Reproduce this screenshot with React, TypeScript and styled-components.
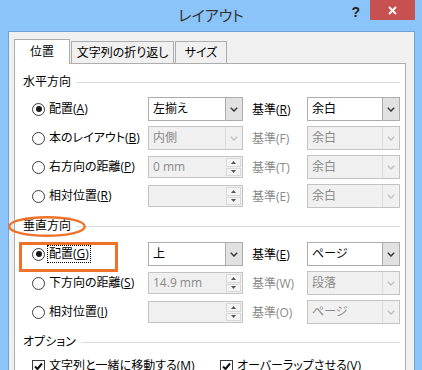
import React from "react";
import styled, { createGlobalStyle } from "styled-components";

const ORANGE = "#ee7229";

const GlobalStyle = createGlobalStyle`
  html, body {
    margin: 0;
    padding: 0;
  }
  body {
    width: 422px;
    height: 370px;
    overflow: hidden;
    font-family: "Open Sans", "Noto Sans CJK JP", sans-serif;
    font-size: 12px;
    color: #000;
    font-feature-settings: "palt" 1;
  }
  * {
    box-sizing: border-box;
  }
`;

const Frame = styled.div`
  width: 422px;
  height: 370px;
  background: #8bc4f8;
  display: flex;
  flex-direction: column;
  overflow: hidden;
`;

const TitleBar = styled.div`
  height: 31px;
  flex: none;
  display: grid;
  grid-template-columns: 1fr auto 1fr;
  align-items: start;
`;

const Title = styled.div`
  grid-column: 2;
  font-size: 15px;
  line-height: 30px;
  color: #333;
`;

const Controls = styled.div`
  grid-column: 3;
  justify-self: end;
  display: flex;
  align-items: flex-start;
  margin-right: 7px;
`;

const HelpButton = styled.span`
  font-family: "Liberation Sans", sans-serif;
  font-weight: bold;
  font-size: 14px;
  color: #222;
  line-height: 24px;
  margin-right: 10px;
`;

const CloseButton = styled.div`
  width: 45px;
  height: 20px;
  background: #c75050;
  display: flex;
  align-items: center;
  justify-content: center;
`;

const Client = styled.div`
  flex: 1;
  min-height: 0;
  margin: 0 7px 0 8px;
  border: 1px solid #6fa3d6;
  border-bottom: none;
  background: #f0f0f0;
  padding: 7px 8px 0 5px;
  display: flex;
  flex-direction: column;
`;

const TabStrip = styled.div`
  display: flex;
  align-items: flex-end;
  position: relative;
  z-index: 1;
  margin-bottom: -1px;
`;

const Tab = styled.div<{ $active?: boolean; $w: number }>`
  width: ${(p) => p.$w}px;
  height: ${(p) => (p.$active ? 25 : 22)}px;
  margin-bottom: ${(p) => (p.$active ? 0 : 1)}px;
  margin-right: 1px;
  border: 1px solid #adadad;
  border-bottom: none;
  background: ${(p) => (p.$active ? "#fff" : "#f0f0f0")};
  display: flex;
  align-items: center;
  justify-content: center;
  line-height: 16px;
  white-space: nowrap;
`;

const Panel = styled.div`
  flex: 1;
  background: #fff;
  border: 1px solid #adadad;
  padding: 10px 5px 0 8px;
`;

const SectionHead = styled.div<{ $mt?: number; $mb?: number }>`
  position: relative;
  display: flex;
  align-items: center;
  gap: 5px;
  height: 16px;
  line-height: 16px;
  margin: ${(p) => p.$mt ?? 0}px 0 ${(p) => p.$mb ?? 7}px;
  &::after {
    content: "";
    flex: 1;
    height: 1px;
    background: #dcdcdc;
  }
`;

const Ellipse = styled.svg`
  position: absolute;
  left: -15px;
  top: -2px;
  overflow: visible;
`;

const Rows = styled.div`
  display: grid;
  grid-auto-rows: 24px;
  row-gap: 5px;
`;

const Row = styled.div`
  position: relative;
  display: grid;
  grid-template-columns: 125px 95px 64px 93px;
  align-items: center;
`;

const Highlight = styled.div`
  position: absolute;
  left: -4px;
  top: 0;
  width: 99px;
  height: 30px;
  border: 3px solid ${ORANGE};
  pointer-events: none;
`;

const Choice = styled.label`
  display: flex;
  align-items: center;
  gap: 4px;
  padding-left: 9px;
  line-height: 16px;
  white-space: nowrap;
`;

const RadioCircle = styled.span<{ $checked?: boolean }>`
  width: 13px;
  height: 13px;
  border-radius: 50%;
  border: 1px solid #3c3c3c;
  background: #fff;
  display: flex;
  align-items: center;
  justify-content: center;
  flex: none;
  &::after {
    content: "";
    width: 6px;
    height: 6px;
    border-radius: 50%;
    background: ${(p) => (p.$checked ? "#1a1a1a" : "transparent")};
  }
`;

const Focused = styled.span`
  outline: 1px dotted #000;
  padding: 0 1px;
  margin-left: -1px;
`;

const Box = styled.div<{ $disabled?: boolean; $spin?: boolean }>`
  height: ${(p) => (p.$spin ? 22 : 24)}px;
  border: 1px solid ${(p) => (p.$disabled ? "#c4c4c4" : "#acacac")};
  background: ${(p) => (p.$disabled ? "#f0f0f0" : "#fff")};
  color: ${(p) => (p.$disabled ? "#8a8a8a" : "#000")};
  display: flex;
  align-items: stretch;
  line-height: 16px;
`;

const BoxText = styled.span`
  flex: 1;
  padding-left: 4px;
  display: flex;
  align-items: center;
  white-space: nowrap;
  overflow: hidden;
`;

const DropButton = styled.span<{ $disabled?: boolean }>`
  width: 17px;
  flex: none;
  border-left: 1px solid ${(p) => (p.$disabled ? "#dadada" : "#acacac")};
  background: ${(p) => (p.$disabled ? "transparent" : "#e1e1e1")};
  display: flex;
  align-items: center;
  justify-content: center;
`;

const SpinColumn = styled.span`
  width: 17px;
  flex: none;
  display: flex;
  flex-direction: column;
  gap: 1px;
  padding: 1px;
`;

const SpinHalf = styled.span`
  flex: 1;
  border: 1px solid #d8d8d8;
  background: #f4f4f4;
  display: flex;
  align-items: center;
  justify-content: center;
`;

const RefLabel = styled.span<{ $disabled?: boolean }>`
  padding-left: 9px;
  color: ${(p) => (p.$disabled ? "#8a8a8a" : "#000")};
  white-space: nowrap;
`;

const CheckRow = styled.div`
  display: grid;
  grid-template-columns: 188px 1fr;
  height: 16px;
  align-items: center;
`;

const CheckSquare = styled.span`
  width: 13px;
  height: 13px;
  border: 1px solid #3c3c3c;
  background: #fff;
  display: flex;
  align-items: center;
  justify-content: center;
  flex: none;
`;

const Chevron = ({ color }: { color: string }) => (
  <svg width="8" height="5" viewBox="0 0 8 5">
    <path d="M0.8 0.8 L4 4 L7.2 0.8" fill="none" stroke={color} strokeWidth="1.5" />
  </svg>
);

const Mn = ({ children }: { children: React.ReactNode }) => <u>{children}</u>;

type ComboProps = { value: string; disabled?: boolean };

const Combo = ({ value, disabled }: ComboProps) => (
  <Box $disabled={disabled}>
    <BoxText>{value}</BoxText>
    <DropButton $disabled={disabled}>
      <Chevron color={disabled ? "#c2c2c2" : "#3a3a3a"} />
    </DropButton>
  </Box>
);

const Spin = ({ value }: { value: string }) => (
  <Box $disabled $spin>
    <BoxText>{value}</BoxText>
    <SpinColumn>
      <SpinHalf>
        <svg width="5" height="3" viewBox="0 0 5 3">
          <path d="M0 3 L2.5 0 L5 3 Z" fill="#555" />
        </svg>
      </SpinHalf>
      <SpinHalf>
        <svg width="5" height="3" viewBox="0 0 5 3">
          <path d="M0 0 L2.5 3 L5 0 Z" fill="#555" />
        </svg>
      </SpinHalf>
    </SpinColumn>
  </Box>
);

const Radio = ({ checked, children }: { checked?: boolean; children: React.ReactNode }) => (
  <Choice>
    <RadioCircle $checked={checked} />
    <span>{children}</span>
  </Choice>
);

const Check = ({ children }: { children: React.ReactNode }) => (
  <Choice>
    <CheckSquare>
      <svg width="9" height="9" viewBox="0 0 9 9">
        <path d="M1 4.5 L3.5 7 L8 1.5" fill="none" stroke="#111" strokeWidth="2" />
      </svg>
    </CheckSquare>
    <span>{children}</span>
  </Choice>
);

export default function App() {
  return (
    <>
      <GlobalStyle />
      <Frame>
        <TitleBar>
          <Title>レイアウト</Title>
          <Controls>
            <HelpButton>?</HelpButton>
            <CloseButton>
              <svg width="9" height="9" viewBox="0 0 9 9">
                <path d="M1 1 L8 8 M8 1 L1 8" stroke="#fff" strokeWidth="1.8" />
              </svg>
            </CloseButton>
          </Controls>
        </TitleBar>
        <Client>
          <TabStrip>
            <Tab $active $w={56}>位置</Tab>
            <Tab $w={103}>文字列の折り返し</Tab>
            <Tab $w={52}>サイズ</Tab>
          </TabStrip>
          <Panel>
            <SectionHead>水平方向</SectionHead>
            <Rows>
              <Row>
                <Radio checked>
                  配置(<Mn>A</Mn>)
                </Radio>
                <Combo value="左揃え" />
                <RefLabel>
                  基準(<Mn>R</Mn>)
                </RefLabel>
                <Combo value="余白" />
              </Row>
              <Row>
                <Radio>
                  本のレイアウト(<Mn>B</Mn>)
                </Radio>
                <Combo value="内側" disabled />
                <RefLabel $disabled>基準(F)</RefLabel>
                <Combo value="余白" disabled />
              </Row>
              <Row>
                <Radio>
                  右方向の距離(<Mn>P</Mn>)
                </Radio>
                <Spin value="0 mm" />
                <RefLabel $disabled>基準(T)</RefLabel>
                <Combo value="余白" disabled />
              </Row>
              <Row>
                <Radio>
                  相対位置(<Mn>R</Mn>)
                </Radio>
                <Spin value="" />
                <RefLabel $disabled>基準(E)</RefLabel>
                <Combo value="余白" disabled />
              </Row>
            </Rows>

            <SectionHead $mt={10} $mb={8}>
              垂直方向
              <Ellipse width="78" height="21" viewBox="0 0 78 21">
                <ellipse cx="39" cy="10.5" rx="37.8" ry="9.3" fill="none" stroke={ORANGE} strokeWidth="2.4" />
              </Ellipse>
            </SectionHead>
            <Rows>
              <Row>
                <Choice>
                  <RadioCircle $checked />
                  <Focused>
                    配置(<Mn>G</Mn>)
                  </Focused>
                </Choice>
                <Combo value="上" />
                <RefLabel>
                  基準(<Mn>E</Mn>)
                </RefLabel>
                <Combo value="ページ" />
                <Highlight />
              </Row>
              <Row>
                <Radio>
                  下方向の距離(<Mn>S</Mn>)
                </Radio>
                <Spin value="14.9 mm" />
                <RefLabel $disabled>基準(W)</RefLabel>
                <Combo value="段落" disabled />
              </Row>
              <Row>
                <Radio>
                  相対位置(<Mn>I</Mn>)
                </Radio>
                <Spin value="" />
                <RefLabel $disabled>基準(O)</RefLabel>
                <Combo value="ページ" disabled />
              </Row>
            </Rows>

            <SectionHead $mt={10} $mb={8}>オプション</SectionHead>
            <CheckRow>
              <Check>
                文字列と一緒に移動する(<Mn>M</Mn>)
              </Check>
              <Check>
                オーバーラップさせる(<Mn>V</Mn>)
              </Check>
            </CheckRow>
          </Panel>
        </Client>
      </Frame>
    </>
  );
}
